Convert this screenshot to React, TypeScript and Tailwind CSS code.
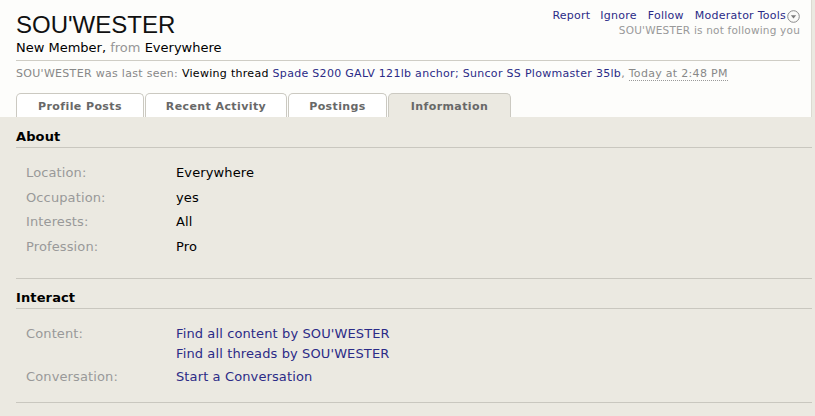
import React from "react";

const tabs = [
  { label: "Profile Posts", w: "w-[128px]", active: false },
  { label: "Recent Activity", w: "w-[142px]", active: false },
  { label: "Postings", w: "w-[99px]", active: false },
  { label: "Information", w: "w-[123px]", active: true },
];

const about = [
  ["Location:", "Everywhere"],
  ["Occupation:", "yes"],
  ["Interests:", "All"],
  ["Profession:", "Pro"],
];

function MenuCircle() {
  return (
    <svg width="13" height="13" viewBox="0 0 13 13" className="ml-[1px]">
      <circle cx="6.5" cy="6.5" r="5.8" fill="#fafaf8" stroke="#8a8a8a" strokeWidth="1" />
      <path d="M3.8 5.2 L9.2 5.2 L6.5 8.4 Z" fill="#7a7a7a" />
    </svg>
  );
}

export default function App() {
  return (
    <div
      className="w-[815px] h-[416px] overflow-hidden bg-[#ebe9e1] text-black"
      style={{ fontFamily: '"DejaVu Sans", Verdana, sans-serif' }}
    >
      {/* profile header */}
      <div className="w-[812px] bg-[#fdfdfb] border-r border-[#dcdad2] pl-4 pr-[11px] pt-[13px]">
        <div className="flex justify-between">
          <div>
            <h1 className="text-[24px] leading-none font-['Liberation_Sans',Arial,sans-serif] text-[#111]">SOU'WESTER</h1>
            <div className="mt-[3px] text-[13px] leading-[16px]">
              New Member, <span className="text-[#969696]">from</span> Everywhere
            </div>
          </div>
          <div className="flex flex-col items-end -mt-[5px]">
            <div className="flex items-center text-[11px] leading-[16px] tracking-[0.25px] text-[#2b2b87]">
              <span>Report</span>
              <span className="ml-[10px]">Ignore</span>
              <span className="ml-[11px]">Follow</span>
              <span className="ml-[11px]">Moderator Tools</span>
              <MenuCircle />
            </div>
            <div className="text-[10.5px] leading-[13px] text-[#999] tracking-[0.2px]">SOU'WESTER is not following you</div>
          </div>
        </div>
        <div className="mt-[4px] border-t border-[#cfcdc5]" />
        <div className="pt-[6px] text-[11px] leading-[14px] tracking-[0.3px] text-[#888] whitespace-nowrap">
          SOU'WESTER was last seen: <span className="text-black">Viewing thread</span>{" "}
          <span className="text-[#2b2b87]">Spade S200 GALV 121lb anchor; Suncor SS Plowmaster 35lb</span>,{" "}
          <span className="border-b border-dotted border-[#999]">Today at 2:48 PM</span>
        </div>
        <div className="mt-[12px] flex gap-[1px]">
          {tabs.map((t) => (
            <div
              key={t.label}
              className={`${t.w} h-[24px] pt-[2px] border border-b-0 border-[#cbc9c1] rounded-t-[5px] text-center text-[11px] leading-[21px] tracking-[0.4px] font-bold text-[#686868] ${
                t.active ? "bg-[#ebe9e1]" : "bg-white"
              }`}
            >
              {t.label}
            </div>
          ))}
        </div>
      </div>

      {/* information */}
      <div className="pl-4 pr-[3px] tracking-[0.12px]">
        <section className="pt-[12px] pb-[21px] border-b border-[#c9c7bf]">
          <h3 className="text-[13px] leading-[16px] font-bold pb-[2px] border-b border-[#c9c7bf]">About</h3>
          <dl className="mt-[15px] flex flex-col gap-[4.5px] text-[13px] leading-[20px]">
            {about.map(([k, v]) => (
              <div key={k} className="flex">
                <dt className="w-[160px] pl-[10px] text-[#999]">{k}</dt>
                <dd>{v}</dd>
              </div>
            ))}
          </dl>
        </section>
        <section className="pt-[11px] pb-[15px] border-b border-[#c9c7bf]">
          <h3 className="text-[13px] leading-[16px] font-bold pb-[2px] border-b border-[#c9c7bf]">Interact</h3>
          <dl className="mt-[15px] flex flex-col gap-[3.5px] text-[13px] leading-[20px]">
            <div className="flex">
              <dt className="w-[160px] pl-[10px] text-[#999]">Content:</dt>
              <dd className="flex flex-col text-[#2b2b87]">
                <span>Find all content by SOU'WESTER</span>
                <span>Find all threads by SOU'WESTER</span>
              </dd>
            </div>
            <div className="flex">
              <dt className="w-[160px] pl-[10px] text-[#999]">Conversation:</dt>
              <dd className="text-[#2b2b87]">Start a Conversation</dd>
            </div>
          </dl>
        </section>
      </div>
    </div>
  );
}
